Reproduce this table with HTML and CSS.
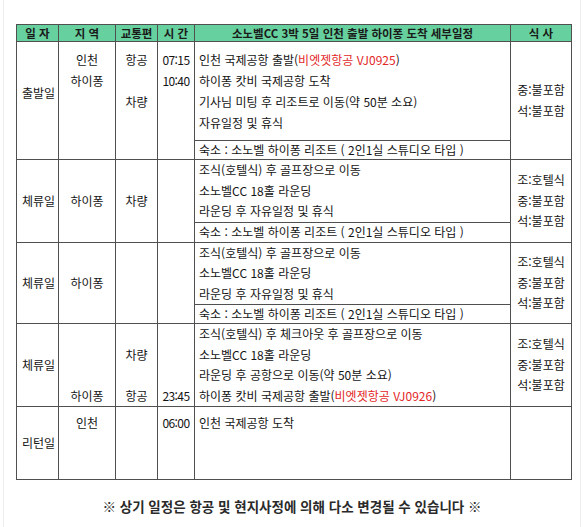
FILE: index.html
```html
<!DOCTYPE html>
<html lang="ko">
<head>
<meta charset="utf-8">
<title>소노벨CC 3박 5일 세부일정</title>
<link rel="stylesheet" href="styles.css">
</head>
<body>
<div class="page">
  <table class="sched">
    <colgroup>
      <col class="c-date"><col class="c-area"><col class="c-trans"><col class="c-time"><col class="c-plan"><col class="c-meal">
    </colgroup>
    <thead>
      <tr class="head">
        <th>일 자</th><th>지 역</th><th>교통편</th><th>시 간</th><th>소노벨CC 3박 5일 인천 출발 하이퐁 도착 세부일정</th><th>식 사</th>
      </tr>
    </thead>
    <tbody>
      <tr class="r1">
        <td rowspan="2" class="day d1">출발일</td>
        <td rowspan="2" class="top t1">인천<br>하이퐁</td>
        <td rowspan="2" class="top t1">항공<br><br>차량</td>
        <td rowspan="2" class="top t1 time">07:15<br>10:40</td>
        <td class="plan p1">인천 국제공항 출발(<span class="red">비엣젯항공 VJ0925</span>)<br>하이퐁 캇비 국제공항 도착<br>기사님 미팅 후 리조트로 이동(약 50분 소요)<br>자유일정 및 휴식</td>
        <td rowspan="2" class="meal">중:불포함<br>석:불포함</td>
      </tr>
      <tr class="s1"><td class="plan stay">숙소 : 소노벨 하이퐁 리조트 ( 2인1실 스튜디오 타입 )</td></tr>

      <tr class="r2">
        <td rowspan="2" class="day">체류일</td>
        <td rowspan="2" class="mid">하이퐁</td>
        <td rowspan="2" class="mid">차량</td>
        <td rowspan="2" class="mid"></td>
        <td class="plan">조식(호텔식) 후 골프장으로 이동<br>소노벨CC 18홀 라운딩<br>라운딩 후 자유일정 및 휴식</td>
        <td rowspan="2" class="meal">조:호텔식<br>중:불포함<br>석:불포함</td>
      </tr>
      <tr class="s2"><td class="plan stay">숙소 : 소노벨 하이퐁 리조트 ( 2인1실 스튜디오 타입 )</td></tr>

      <tr class="r3">
        <td rowspan="2" class="day">체류일</td>
        <td rowspan="2" class="mid">하이퐁</td>
        <td rowspan="2" class="mid"></td>
        <td rowspan="2" class="mid"></td>
        <td class="plan">조식(호텔식) 후 골프장으로 이동<br>소노벨CC 18홀 라운딩<br>라운딩 후 자유일정 및 휴식</td>
        <td rowspan="2" class="meal">조:호텔식<br>중:불포함<br>석:불포함</td>
      </tr>
      <tr class="s3"><td class="plan stay">숙소 : 소노벨 하이퐁 리조트 ( 2인1실 스튜디오 타입 )</td></tr>

      <tr class="r4">
        <td class="day">체류일</td>
        <td class="mid"><br><br><br>하이퐁</td>
        <td class="mid"><br>차량<br><br>항공</td>
        <td class="mid time"><br><br><br>23:45</td>
        <td class="plan">조식(호텔식) 후 체크아웃 후 골프장으로 이동<br>소노벨CC 18홀 라운딩<br>라운딩 후 공항으로 이동(약 50분 소요)<br>하이퐁 캇비 국제공항 출발(<span class="red">비엣젯항공 VJ0926</span>)</td>
        <td class="meal">조:호텔식<br>중:불포함<br>석:불포함</td>
      </tr>

      <tr class="r5">
        <td class="day">리턴일</td>
        <td class="top t5">인천</td>
        <td class="top t5"></td>
        <td class="top t5 time">06:00</td>
        <td class="plan top t5">인천 국제공항 도착</td>
        <td class="meal"></td>
      </tr>
    </tbody>
  </table>
  <p class="notice">※ 상기 일정은 항공 및 현지사정에 의해 다소 변경될 수 있습니다 ※</p>
</div>
</body>
</html>
```

FILE: styles.css
```css
html, body {
  margin: 0;
  padding: 0;
  background: #ffffff;
}

body {
  font-family: "Noto Sans CJK KR", "Noto Sans", sans-serif;
  color: #141414;
}

.page {
  width: 578px;
  height: 527px;
  margin-left: 3px;
  border-left: 1px solid #ededed;
  border-right: 1px solid #ededed;
  padding-top: 24px;
  box-sizing: border-box;
}

.sched {
  margin-left: 12px;
  width: 555px;
  table-layout: fixed;
  border-collapse: collapse;
  font-size: 12px;
}

.c-date { width: 42px; }
.c-area { width: 57px; }
.c-trans { width: 42px; }
.c-time { width: 37px; }
.c-plan { width: 316px; }
.c-meal { width: 61px; }

.sched th,
.sched td {
  border: 1px solid #505050;
  padding: 0;
  text-align: center;
  vertical-align: middle;
  line-height: 20.5px;
  white-space: nowrap;
  overflow: hidden;
}

.sched th {
  background: #66d19e;
  font-weight: 700;
  color: #1a1a1a;
  height: 16px;
  line-height: 16px;
  font-size: 11.5px;
}

.sched td.plan {
  text-align: left;
  padding-left: 4px;
}

.sched td.day {
  padding-left: 2px;
}

.sched td.top {
  vertical-align: top;
}

.sched td.t1 {
  padding-top: 7px;
  line-height: 21px;
}

.sched td.p1 {
  line-height: 21px;
}

.sched td.d1 {
  vertical-align: top;
  padding-top: 41px;
}

.sched td.t5 {
  padding-top: 6px;
}

.sched td.time {
  letter-spacing: -0.6px;
}

.red {
  color: #e32626;
}

.r1 { height: 99px; }
.s1 { height: 19px; }
.r2 { height: 61px; }
.s2 { height: 20px; }
.r3 { height: 60px; }
.s3 { height: 19px; }
.r4 { height: 80px; }
.r5 { height: 73px; }

.sched td.stay {
  line-height: 18px;
}

.notice {
  margin: 18px 0 0 0;
  text-align: center;
  font-size: 13.5px;
  line-height: 16px;
  font-weight: 700;
  color: #2a2a2a;
}
```
